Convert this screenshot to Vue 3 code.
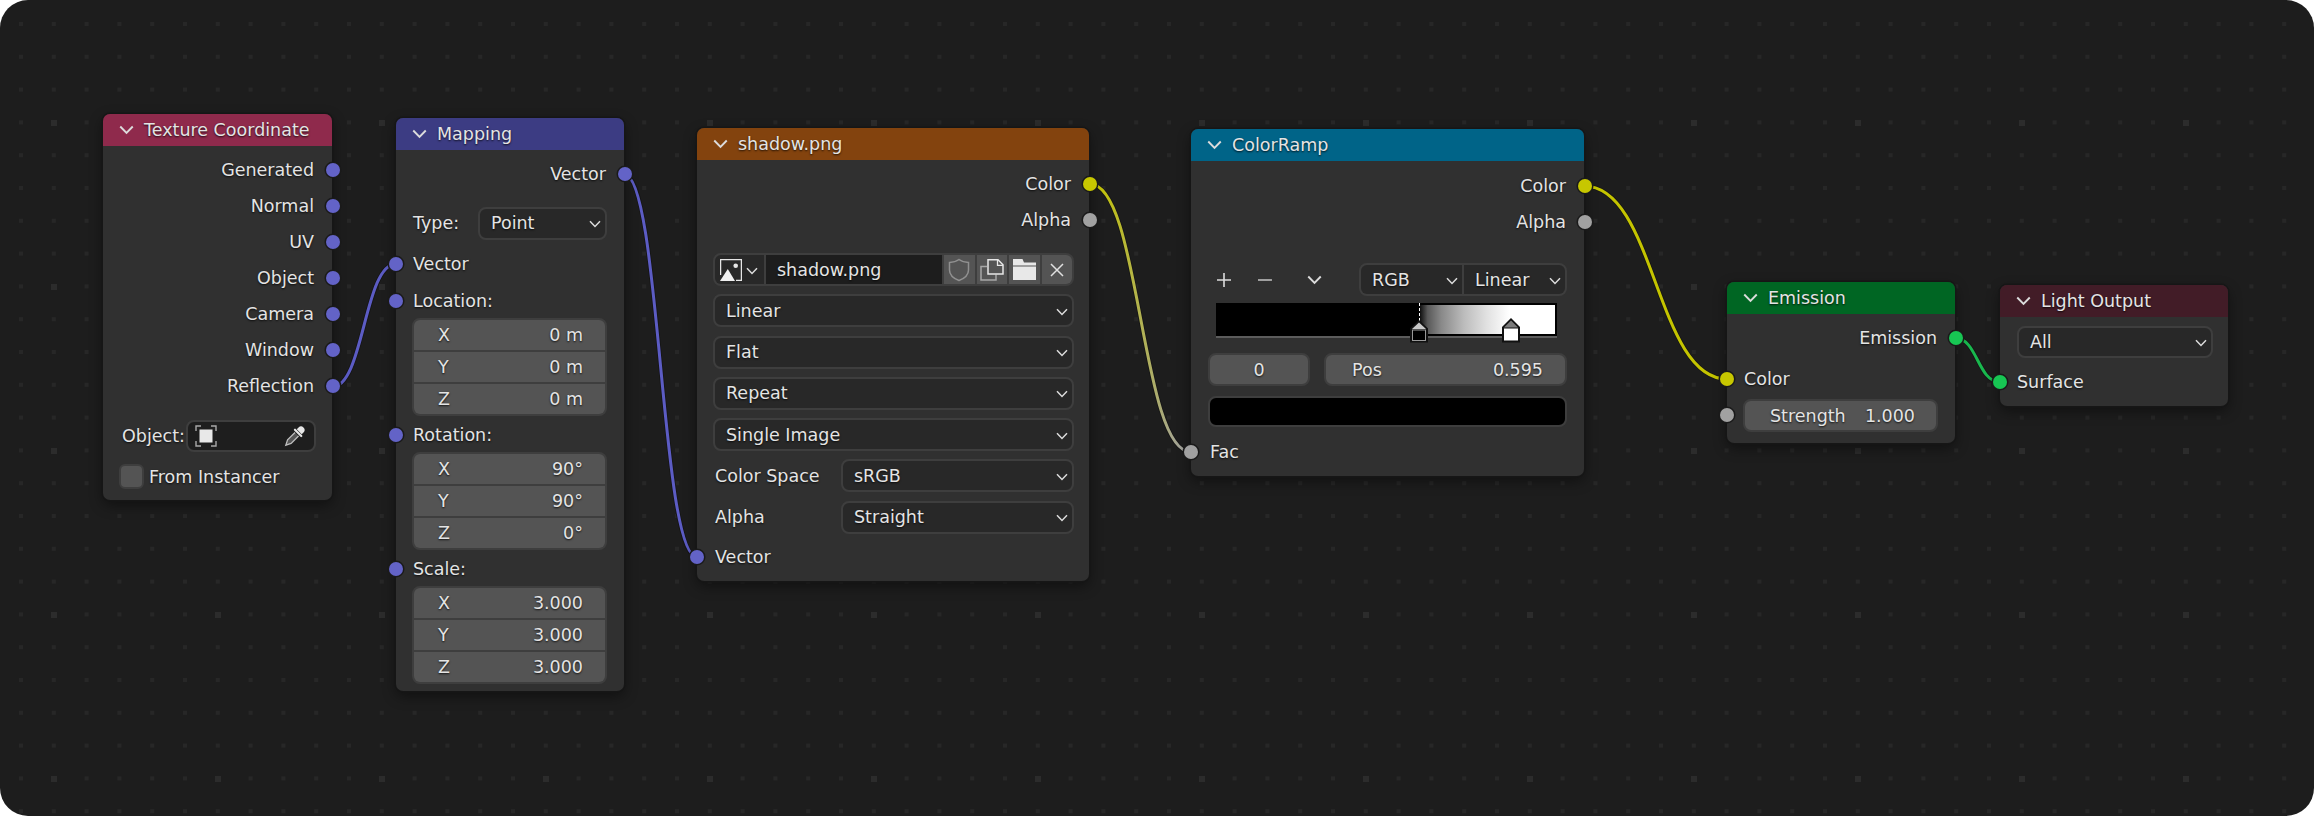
<script setup>
// links between sockets, [x, y] in canvas pixels
const wires = [
  { id: 'w1', from: [332, 387], to: [396, 264], color: '#5c5cc4' },
  { id: 'w2', from: [624, 174], to: [697, 557], color: '#5c5cc4' },
  { id: 'w3', from: [1090, 184], to: [1191, 452], color: 'url(#yellowGrey)' },
  { id: 'w4', from: [1584, 186], to: [1727, 379], color: '#c4c400' },
  { id: 'w5', from: [1955, 338], to: [2000, 382], color: '#19b84e' }
]

const wirePath = ({ from, to }) => {
  const handle = (to[0] - from[0]) / 2
  return `M${from[0]} ${from[1]} C${from[0] + handle} ${from[1]} ${to[0] - handle} ${to[1]} ${to[0]} ${to[1]}`
}

const texOutputs = ['Generated', 'Normal', 'UV', 'Object', 'Camera', 'Window', 'Reflection']
const imageSelects = ['Linear', 'Flat', 'Repeat', 'Single Image']
const location = [['X', '0 m'], ['Y', '0 m'], ['Z', '0 m']]
const rotation = [['X', '90°'], ['Y', '90°'], ['Z', '0°']]
const scale = [['X', '3.000'], ['Y', '3.000'], ['Z', '3.000']]
const vectorGroups = [
  { label: 'Location:', values: location },
  { label: 'Rotation:', values: rotation },
  { label: 'Scale:', values: scale }
]
</script>

<template>
  <div class="canvas">
    <svg class="hidden-defs" width="0" height="0">
      <symbol id="chev" viewBox="0 0 12 8">
        <path d="M1 1.2 L6 6.4 L11 1.2" fill="none" stroke="currentColor" stroke-width="1.5" />
      </symbol>
    </svg>

    <svg class="backdrop" width="2314" height="816">
      <defs>
        <pattern id="dots" patternUnits="userSpaceOnUse" x="19" y="22" width="32.8" height="32.8">
          <rect width="4" height="4" fill="#272727" />
        </pattern>
        <pattern id="bigDots" patternUnits="userSpaceOnUse" x="51" y="120" width="164" height="164">
          <rect width="6" height="6" fill="#2c2c2c" />
        </pattern>
        <linearGradient id="yellowGrey" gradientUnits="userSpaceOnUse" x1="1095" y1="0" x2="1185" y2="0">
          <stop offset="0" stop-color="#c4c400" />
          <stop offset="1" stop-color="#a1a1a1" />
        </linearGradient>
      </defs>
      <rect width="2314" height="816" fill="url(#dots)" />
      <rect width="2314" height="816" fill="url(#bigDots)" />
      <g v-for="wire in wires" :key="wire.id" fill="none">
        <path :d="wirePath(wire)" stroke="#151515" stroke-width="4.6" />
        <path :d="wirePath(wire)" :stroke="wire.color" stroke-width="3" />
      </g>
    </svg>

    <!-- Texture Coordinate -->
    <div class="node node-tex">
      <div class="head head-tex">
        <svg class="head-chev"><use href="#chev" /></svg>
        <span>Texture Coordinate</span>
      </div>
      <div class="body">
        <div v-for="name in texOutputs" :key="name" class="row out">
          {{ name }}<i class="socket right vec"></i>
        </div>
        <div class="object-row">
          <span class="object-label">Object:</span>
          <div class="select object-select">
            <svg class="icon-object" viewBox="0 0 22 22">
              <path d="M1 6V1H6M16 1H21V6M21 16V21H16M6 21H1V16" fill="none" stroke="#a8a8a8" stroke-width="1.4" />
              <rect x="4.5" y="4.5" width="13" height="13" fill="#e8e8e8" />
            </svg>
            <svg class="icon-dropper" viewBox="0 0 24 24">
              <g transform="rotate(45 12 12)">
                <path d="M8.5 6V3.5a3.5 3.5 0 0 1 7 0V6z" fill="#e6e6e6" />
                <rect x="6.5" y="6.5" width="11" height="2.2" rx="1" fill="#e6e6e6" />
                <path d="M9.5 9.5V20L12 25L14.5 20V9.5" fill="#555" stroke="#bdbdbd" stroke-width="1.3" />
              </g>
            </svg>
          </div>
        </div>
        <div class="check-row">
          <span class="checkbox"></span>From Instancer
        </div>
      </div>
    </div>

    <!-- Mapping -->
    <div class="node node-map">
      <div class="head head-map">
        <svg class="head-chev"><use href="#chev" /></svg>
        <span>Mapping</span>
      </div>
      <div class="body">
        <div class="row out">Vector<i class="socket right vec"></i></div>
        <div class="type-row">
          <span class="type-label">Type:</span>
          <div class="select grow"><span>Point</span><svg class="chev"><use href="#chev" /></svg></div>
        </div>
        <div class="row in vector-in">Vector<i class="socket left vec"></i></div>
        <template v-for="group in vectorGroups" :key="group.label">
          <div class="row in group-label">{{ group.label }}<i class="socket left vec"></i></div>
          <div class="fields">
            <div v-for="item in group.values" :key="item[0]" class="field-row">
              <span>{{ item[0] }}</span><span>{{ item[1] }}</span>
            </div>
          </div>
        </template>
      </div>
    </div>

    <!-- Image texture -->
    <div class="node node-img">
      <div class="head head-img">
        <svg class="head-chev"><use href="#chev" /></svg>
        <span>shadow.png</span>
      </div>
      <div class="body">
        <div class="row out">Color<i class="socket right col"></i></div>
        <div class="row out">Alpha<i class="socket right val"></i></div>
        <div class="stack">
          <div class="image-row">
            <div class="image-pick">
              <svg class="icon-image" viewBox="0 0 22 22">
                <path d="M16 21.4H21.4V.6H.6V16" fill="none" stroke="#e6e6e6" stroke-width="1.3" />
                <circle cx="15.7" cy="6.7" r="2.3" fill="#e6e6e6" />
                <path d="M0 22L7.8 10L15 22Z" fill="#f0f0f0" />
              </svg>
              <svg class="chev"><use href="#chev" /></svg>
            </div>
            <div class="image-name">shadow.png</div>
            <div class="image-btn">
              <svg viewBox="0 0 22 24" width="22" height="24">
                <path d="M11 1.5C8 3.8 5 4.4 1.5 4.4V12C1.5 17 6.5 20.8 11 22.5C15.5 20.8 20.5 17 20.5 12V4.4C17 4.4 14 3.8 11 1.5Z" fill="none" stroke="#909090" stroke-width="1.5" />
              </svg>
            </div>
            <div class="image-btn">
              <svg viewBox="0 0 24 22" width="24" height="22">
                <path d="M7 7.5H1V21H16V15.5" fill="none" stroke="#a6a6a6" stroke-width="1.5" />
                <path d="M8 .8H18L23 5.8V15H8Z" fill="#545454" stroke="#e6e6e6" stroke-width="1.5" />
                <path d="M17.5 1V6.3H23" fill="none" stroke="#e6e6e6" stroke-width="1.3" />
              </svg>
            </div>
            <div class="image-btn">
              <svg viewBox="0 0 23 21" width="23" height="21">
                <path d="M0 0H9.5L11 3.5H23V6.5H0Z" fill="#e8e8e8" />
                <rect y="7.5" width="23" height="13.5" fill="#e8e8e8" />
              </svg>
            </div>
            <div class="image-btn">
              <svg viewBox="0 0 14 14" width="14" height="14">
                <path d="M1 1L13 13M13 1L1 13" fill="none" stroke="#e0e0e0" stroke-width="1.5" />
              </svg>
            </div>
          </div>
          <div v-for="name in imageSelects" :key="name" class="select wide">
            <span>{{ name }}</span><svg class="chev"><use href="#chev" /></svg>
          </div>
          <div class="labelled">
            <span class="labelled-text">Color Space</span>
            <div class="select grow"><span>sRGB</span><svg class="chev"><use href="#chev" /></svg></div>
          </div>
          <div class="labelled">
            <span class="labelled-text">Alpha</span>
            <div class="select grow"><span>Straight</span><svg class="chev"><use href="#chev" /></svg></div>
          </div>
        </div>
        <div class="row in img-vector">Vector<i class="socket left vec"></i></div>
      </div>
    </div>

    <!-- ColorRamp -->
    <div class="node node-ramp">
      <div class="head head-ramp">
        <svg class="head-chev"><use href="#chev" /></svg>
        <span>ColorRamp</span>
      </div>
      <div class="body">
        <div class="row out">Color<i class="socket right col"></i></div>
        <div class="row out">Alpha<i class="socket right val"></i></div>
        <div class="ramp-tools">
          <div class="tool"><svg viewBox="0 0 16 16" width="16" height="16"><path d="M8 1V15M1 8H15" stroke="#dcdcdc" stroke-width="1.6" /></svg></div>
          <div class="tool"><svg viewBox="0 0 16 16" width="16" height="16"><path d="M1 8H15" stroke="#bdbdbd" stroke-width="1.6" /></svg></div>
          <div class="tool"><svg class="tool-chev"><use href="#chev" /></svg></div>
          <div class="ramp-modes">
            <div class="mode mode-rgb"><span>RGB</span><svg class="chev"><use href="#chev" /></svg></div>
            <div class="mode mode-linear"><span>Linear</span><svg class="chev"><use href="#chev" /></svg></div>
          </div>
        </div>
        <div class="ramp">
          <svg class="ramp-handles" width="341" height="42">
            <path d="M203.5 0V18" stroke="#fff" stroke-width="1" stroke-dasharray="3 2" />
            <path d="M203 17L212 25.5V39.5H194V25.5Z" fill="#111" />
            <path d="M203 19.5L210 26H196Z" fill="#c8c8c8" />
            <rect x="196.5" y="27" width="13" height="10.5" fill="#000" stroke="#999" />
            <path d="M295 15L304 24V39.5H286V24Z" fill="#111" />
            <path d="M295 17.5L302 24.5H288Z" fill="#7a7a7a" />
            <rect x="288" y="25.5" width="14" height="12" fill="#fff" />
          </svg>
        </div>
        <div class="ramp-fields">
          <div class="field index">0</div>
          <div class="field pos"><span>Pos</span><span>0.595</span></div>
        </div>
        <div class="swatch"></div>
        <div class="row in fac">Fac<i class="socket left val"></i></div>
      </div>
    </div>

    <!-- Emission -->
    <div class="node node-emit">
      <div class="head head-emit">
        <svg class="head-chev"><use href="#chev" /></svg>
        <span>Emission</span>
      </div>
      <div class="body">
        <div class="row out">Emission<i class="socket right shd"></i></div>
        <div class="row in emit-color">Color<i class="socket left col"></i></div>
        <div class="strength-row">
          <i class="socket left val"></i>
          <div class="field strength"><span>Strength</span><span>1.000</span></div>
        </div>
      </div>
    </div>

    <!-- Light Output -->
    <div class="node node-light">
      <div class="head head-light">
        <svg class="head-chev"><use href="#chev" /></svg>
        <span>Light Output</span>
      </div>
      <div class="body">
        <div class="select light-select"><span>All</span><svg class="chev"><use href="#chev" /></svg></div>
        <div class="row in surface">Surface<i class="socket left shd"></i></div>
      </div>
    </div>
  </div>
</template>

<style scoped>
.canvas {
  position: relative;
  width: 2314px;
  height: 816px;
  overflow: hidden;
  background: #1d1d1d;
  border-radius: 28px;
  font-family: "DejaVu Sans", sans-serif;
  font-size: 17.5px;
  color: #e4e4e4;
}

.hidden-defs {
  position: absolute;
}

.backdrop {
  position: absolute;
  left: 0;
  top: 0;
}

.node {
  position: absolute;
  background: #303030;
  border-radius: 7px;
  box-shadow: 0 0 0 1.5px #161616, 0 5px 14px rgba(0, 0, 0, 0.45);
  text-shadow: 0 1px 2px rgba(0, 0, 0, 0.8);
}

.node-tex { left: 103px; top: 114px; width: 229px; }
.node-map { left: 396px; top: 118px; width: 228px; }
.node-img { left: 697px; top: 128px; width: 392px; }
.node-ramp { left: 1191px; top: 129px; width: 393px; }
.node-emit { left: 1727px; top: 282px; width: 228px; }
.node-light { left: 2000px; top: 285px; width: 228px; }

.head {
  display: flex;
  align-items: center;
  height: 32px;
  border-radius: 7px 7px 0 0;
  padding-left: 16px;
  gap: 10px;
}

.head-tex { background: #8f2a4c; }
.head-map { background: #3c3c83; }
.head-img { background: #83430e; }
.head-ramp { background: #006488; }
.head-emit { background: #006623; }
.head-light { background: #421c27; }

.head-chev {
  width: 15px;
  height: 10px;
  color: #dcdcdc;
}

.body {
  padding-top: 6px;
}

.row {
  position: relative;
  display: flex;
  align-items: center;
  height: 36px;
  padding: 0 17px;
}

.row.out {
  justify-content: flex-end;
  padding-right: 18px;
}

.socket {
  position: absolute;
  top: calc(50% - 7px);
  width: 14px;
  height: 14px;
  border-radius: 50%;
  box-shadow: 0 0 0 1.5px #1a1a1a;
}

.socket.left { left: -7px; }
.socket.right { right: -8px; }
.vec { background: #6363c7; }
.col { background: #c7c700; }
.val { background: #a1a1a1; }
.shd { background: #17c653; }

.select {
  display: flex;
  align-items: center;
  justify-content: space-between;
  box-sizing: border-box;
  height: 33px;
  padding: 0 4px 0 11px;
  background: #282828;
  border: 2px solid #3e3e3e;
  border-radius: 8px;
}

.grow {
  flex: 1;
  min-width: 0;
}

.chev {
  width: 12px;
  height: 8px;
  margin-top: 2px;
  color: #dcdcdc;
}

.object-row {
  display: flex;
  align-items: center;
  margin-top: 16px;
  padding: 0 16px 0 19px;
}

.object-label {
  width: 64px;
}

.object-select {
  flex: 1;
  height: 32px;
  padding: 0 7px;
  background: #1e1e1e;
}

.icon-object {
  width: 22px;
  height: 22px;
}

.icon-dropper {
  width: 24px;
  height: 24px;
}

.check-row {
  display: flex;
  align-items: center;
  gap: 5px;
  margin-top: 12px;
  padding: 0 0 11px 16px;
}

.checkbox {
  box-sizing: border-box;
  width: 25px;
  height: 25px;
  background: #545454;
  border: 2px solid #3e3e3e;
  border-radius: 6px;
}

.type-row {
  display: flex;
  align-items: center;
  height: 32px;
  margin-top: 15px;
  padding: 0 17px 0 17px;
}

.type-label {
  width: 65px;
}

.vector-in {
  margin-top: 7px;
}

.group-label {
  margin-top: 1px;
}

.fields {
  display: flex;
  flex-direction: column;
  gap: 2px;
  margin: -1px 17px 0 16px;
  background: #3e3e3e;
  border: 2px solid #3e3e3e;
  border-radius: 8px;
  overflow: hidden;
}

.field-row {
  display: flex;
  align-items: center;
  justify-content: space-between;
  height: 30px;
  padding: 0 22px 0 24px;
  background: #545454;
}

.node-map .body {
  padding-bottom: 7px;
}

.stack {
  display: flex;
  flex-direction: column;
  gap: 8.3px;
  margin: 15px 15px 0 16px;
}

.image-row {
  display: flex;
  box-sizing: border-box;
  height: 33px;
  gap: 2px;
  background: #3e3e3e;
  border: 2px solid #3e3e3e;
  border-radius: 8px;
  overflow: hidden;
}

.image-pick {
  display: flex;
  align-items: center;
  gap: 4px;
  width: 49px;
  padding-left: 5px;
  box-sizing: border-box;
  background: #282828;
}

.icon-image {
  flex: none;
  width: 22px;
  height: 22px;
}

.image-name {
  display: flex;
  align-items: center;
  width: 176px;
  padding-left: 11px;
  box-sizing: border-box;
  background: #1d1d1d;
}

.image-btn {
  display: flex;
  align-items: center;
  justify-content: center;
  flex: 1;
  background: #545454;
}

.labelled {
  display: flex;
  align-items: center;
  padding-left: 2px;
}

.labelled-text {
  width: 126px;
}

.img-vector {
  margin-top: 5px;
  padding-left: 18px;
}

.node-img .body {
  padding-bottom: 6px;
}

.ramp-tools {
  display: flex;
  align-items: center;
  margin: 23px 17px 0;
}

.tool {
  display: flex;
  align-items: center;
  justify-content: center;
  width: 32px;
  height: 33px;
  margin-right: 9px;
}

.tool:nth-child(2) {
  margin-right: 17px;
}

.tool-chev {
  width: 15px;
  height: 10px;
  color: #dcdcdc;
}

.ramp-modes {
  display: flex;
  box-sizing: border-box;
  margin-left: auto;
  width: 208px;
  height: 33px;
  gap: 2px;
  background: #3e3e3e;
  border: 2px solid #3e3e3e;
  border-radius: 8px;
  overflow: hidden;
}

.mode {
  display: flex;
  align-items: center;
  justify-content: space-between;
  padding: 0 4px 0 11px;
  background: #282828;
}

.mode-rgb { width: 101px; box-sizing: border-box; }
.mode-linear { flex: 1; }

.ramp {
  position: relative;
  box-sizing: border-box;
  height: 33px;
  margin: 7px 27px 0 25px;
  border: 2px solid #000;
  box-shadow: 0 2px 0 #5c5c5c;
  background: linear-gradient(to right, #000 59.5%, #595959 62.2%, #898989 66.25%, #bcbcbc 73%, #e1e1e1 79.75%, #fff 86.5%);
}

.ramp-handles {
  position: absolute;
  left: -2px;
  top: -2px;
  overflow: visible;
}

.ramp-fields {
  display: flex;
  gap: 14px;
  margin: 17px 17px 0;
}

.field {
  display: flex;
  align-items: center;
  box-sizing: border-box;
  height: 33px;
  background: #545454;
  border: 2px solid #3e3e3e;
  border-radius: 8px;
}

.index {
  justify-content: center;
  width: 102px;
}

.pos {
  flex: 1;
  justify-content: space-between;
  padding: 0 22px 0 26px;
}

.swatch {
  box-sizing: border-box;
  height: 31px;
  margin: 10px 17px 0;
  background: #000;
  border: 2px solid #3e3e3e;
  border-radius: 8px;
}

.fac {
  margin-top: 7px;
  padding-left: 19px;
}

.node-ramp .body {
  padding-bottom: 6px;
  padding-top: 7px;
}

.emit-color {
  margin-top: 5px;
}

.strength-row {
  position: relative;
  margin: 2px 0 0;
  padding: 0 17px 11px 16px;
}

.strength-row .socket {
  top: 9px;
}

.strength {
  justify-content: space-between;
  padding: 0 21px 0 25px;
}

.light-select {
  margin: 3px 15px 0 17px;
  height: 32px;
}

.surface {
  margin-top: 6px;
}

.node-light .body {
  padding-bottom: 6px;
}

.wide {
  width: 100%;
}
</style>

<style>
html, body {
  background: #fff;
  margin: 0;
}
</style>
